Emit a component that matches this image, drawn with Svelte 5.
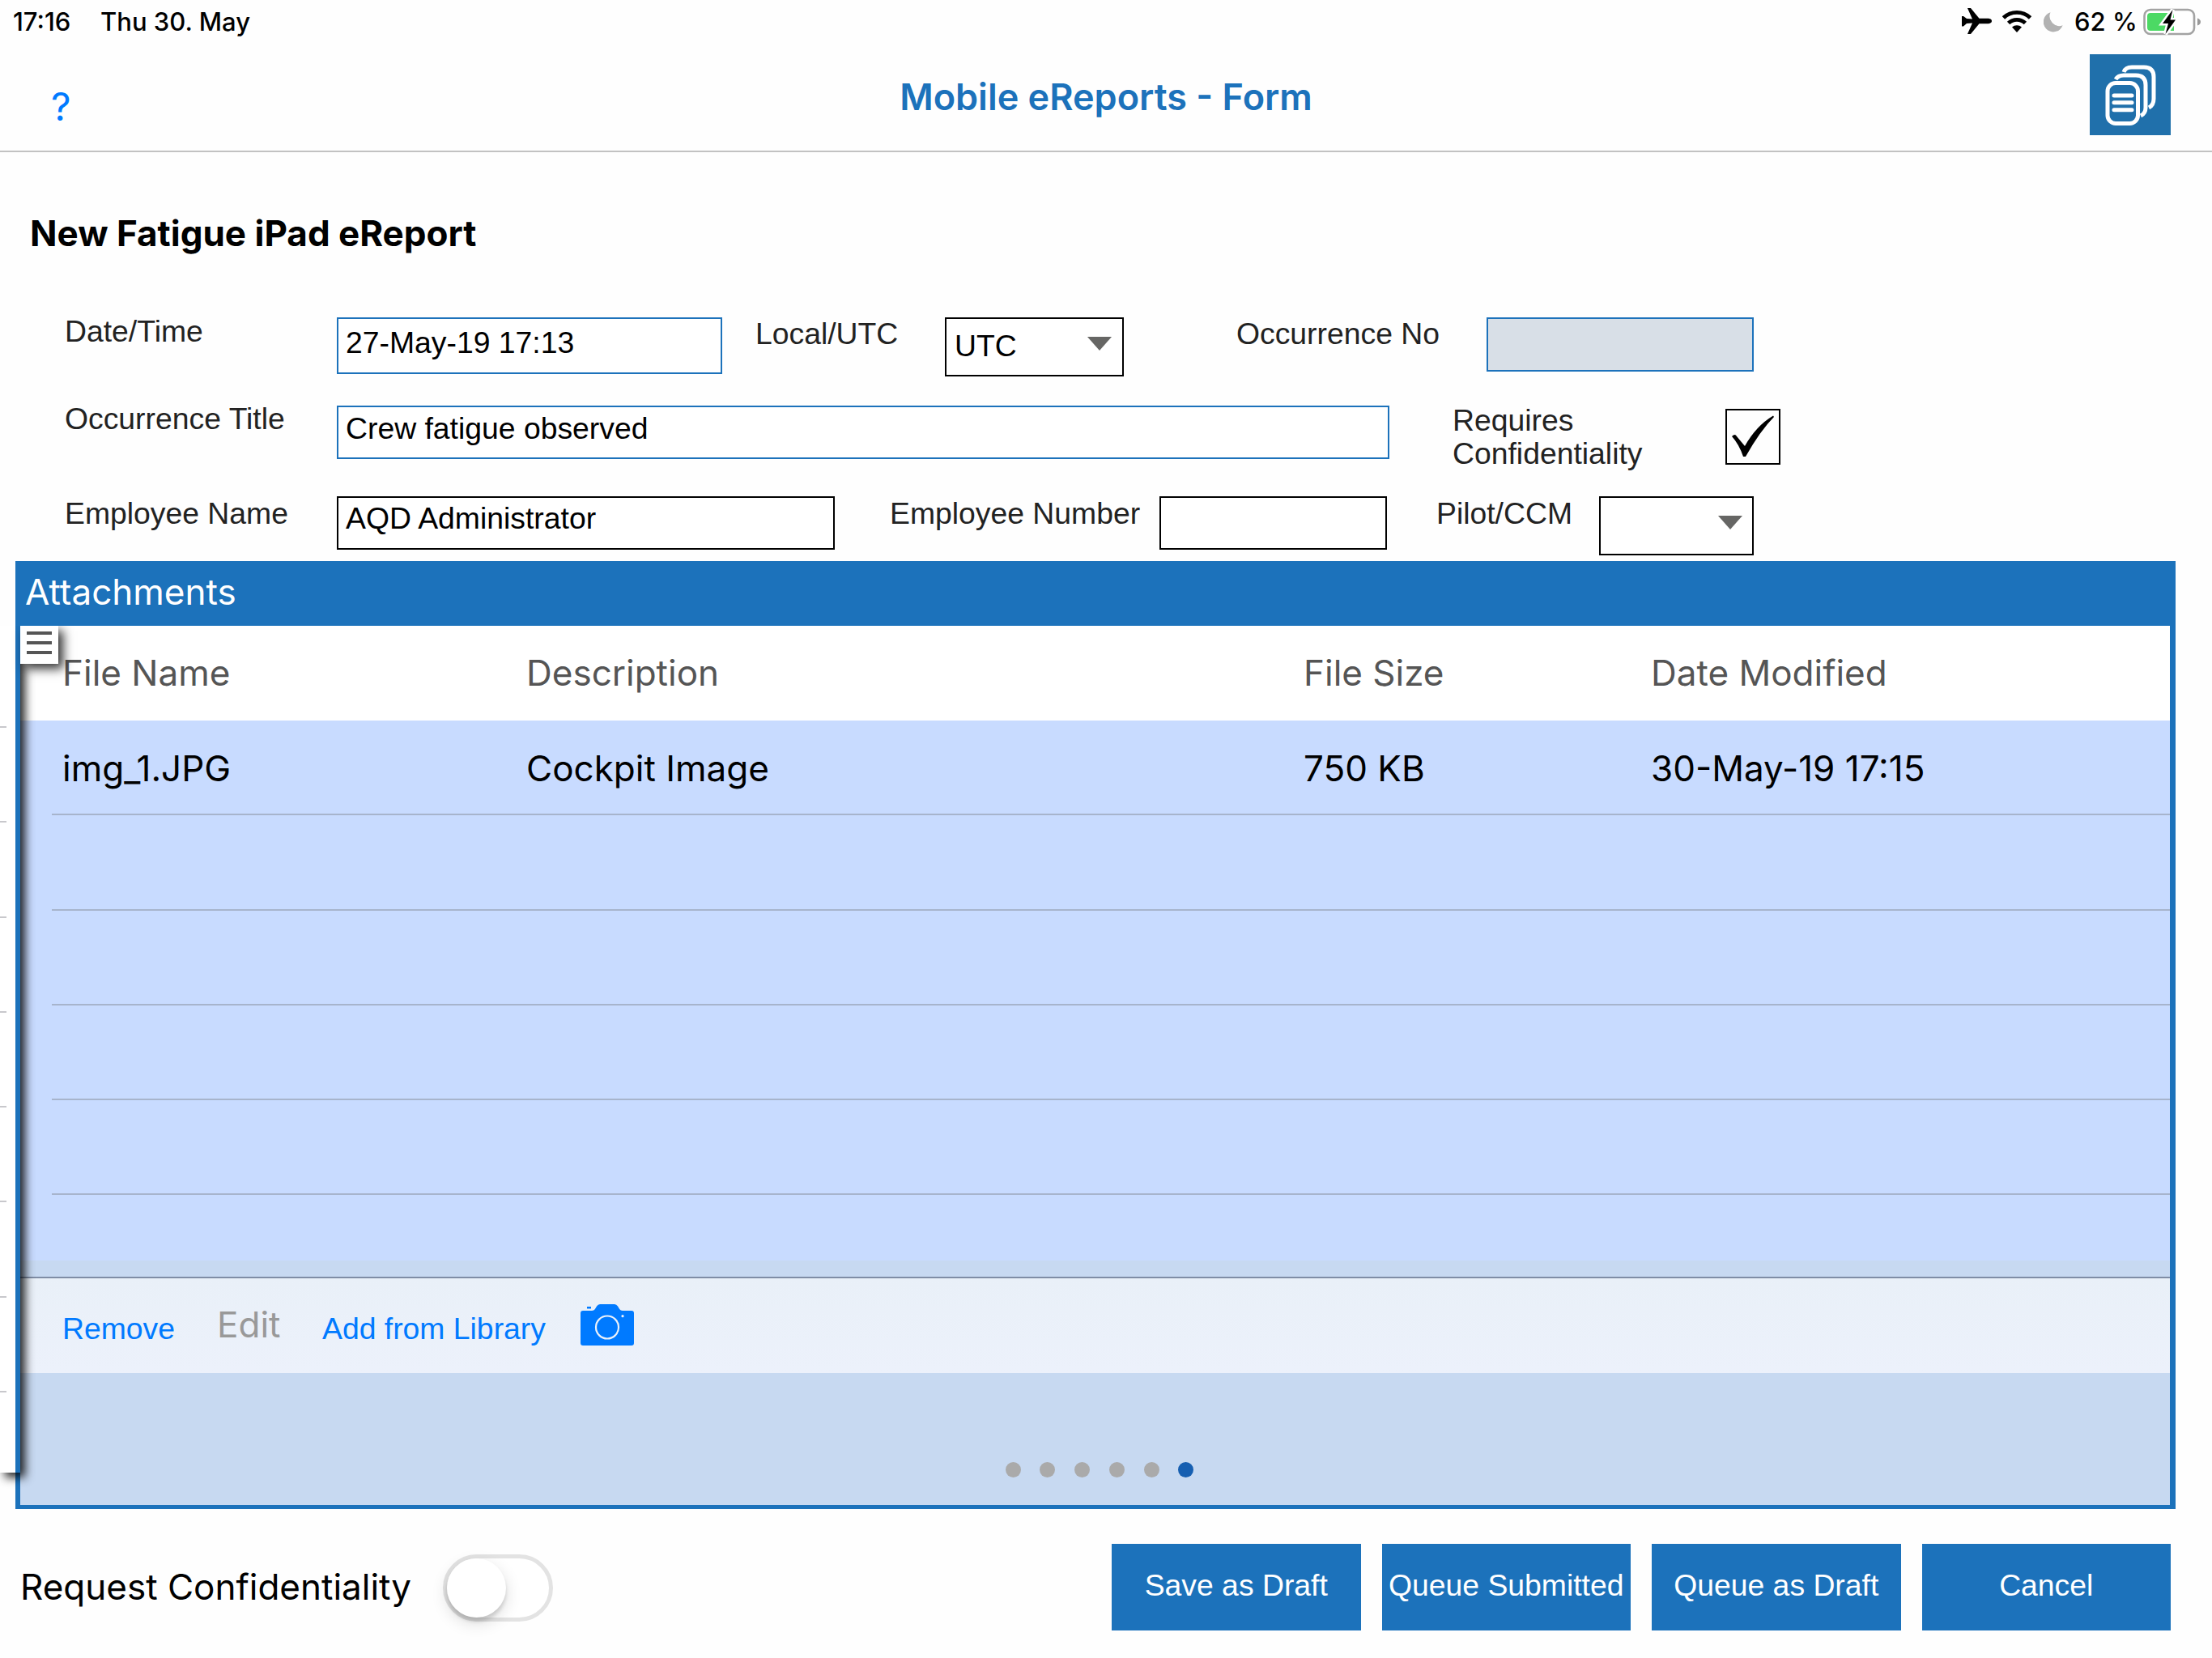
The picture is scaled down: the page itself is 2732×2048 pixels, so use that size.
<script lang="ts">
	const attachments = [
		{ name: 'img_1.JPG', description: 'Cockpit Image', size: '750 KB', modified: '30-May-19 17:15' }
	];
	const emptyRows = [0, 1, 2, 3, 4];
	const drawerLines = [0, 1, 2, 3, 4, 5, 6, 7];

	const pageCount = 6;
	let currentPage = 5;

	const actions = ['Save as Draft', 'Queue Submitted', 'Queue as Draft', 'Cancel'];
	let requestConfidentiality = false;
</script>

<div class="screen">
	<div class="status-bar">
		<span class="time">17:16</span>
		<span class="date">Thu 30. May</span>
		<div class="status-icons">
			<svg class="plane" viewBox="0 0 37 32" width="37" height="32">
				<path d="M0 10 L2 10 L6 13 L13 13.5 L7 0 L11 0 L21.5 12.8 L33 12.8 Q37 13.4 37 16 Q37 18.6 33 19.2 L21.5 19.2 L11 32 L7 32 L13 18.5 L6 19 L2 22.5 L0 22.5 Z" />
			</svg>
			<svg class="wifi" viewBox="0 0 36 27" width="36" height="27">
				<path d="M1.5 9 A24 24 0 0 1 34.5 9" fill="none" stroke="#000" stroke-width="4.8" />
				<path d="M7.6 15.6 A15 15 0 0 1 28.4 15.6" fill="none" stroke="#000" stroke-width="4.8" />
				<path d="M12 20.6 A9 9 0 0 1 24 20.6 L18 27 Z" />
			</svg>
			<svg class="moon" viewBox="0 0 24 25" width="24" height="25">
				<path d="M8.5 0.3 A12.3 12.3 0 1 0 23.6 16.3 A12 12 0 0 1 8.5 0.3 Z" fill="#b2b2b2" />
			</svg>
			<span class="percent">62 %</span>
			<svg class="battery" viewBox="0 0 72 34" width="72" height="34">
				<rect x="1.5" y="2" width="61.5" height="30" rx="7.5" fill="#fff" stroke="#a3a3a3" stroke-width="2.6" />
				<path d="M9 6 H38 V28 H9 Q5 28 5 24 V10 Q5 6 9 6 Z" fill="#4cd964" />
				<path d="M67 12.5 Q71 14 71 17 Q71 20 67 21.5 Z" fill="#999" />
				<path d="M36.5 2 L24 19 H31 L27.5 32 L40 14.5 H33.5 Z" fill="#000" stroke="#fff" stroke-width="5" paint-order="stroke" />
			</svg>
		</div>
	</div>

	<header class="nav">
		<span class="help">?</span>
		<h2 class="nav-title">Mobile eReports - Form</h2>
		<button type="button" class="docs" aria-label="Documents">
			<svg viewBox="0 0 100 100" width="100" height="100" fill="none" stroke="#fff" stroke-width="5">
				<path d="M42 22 Q44 16 52 16 H67 Q79 16 79 28 V55 Q79 63 73 66" />
				<path d="M32 31 Q35 26 42 26 H57 Q69 26 69 38 V66 Q69 73 63 76" />
				<rect x="22" y="35.500" width="37.500" height="50" rx="10" />
				<path d="M30 51 H52 M30 59.800 H52 M30 68.700 H52" stroke-linecap="round" />
			</svg>
		</button>
	</header>

	<h1 class="report-title">New Fatigue iPad eReport</h1>

	<div class="form">
		<div class="form-row first">
			<span class="label">Date/Time</span>
			<div class="field blue date-field">27-May-19 17:13</div>
			<span class="label low">Local/UTC</span>
			<div class="field select utc">UTC<i class="caret"></i></div>
			<span class="label low">Occurrence No</span>
			<div class="field blue readonly"></div>
		</div>
		<div class="form-row second">
			<span class="label">Occurrence Title</span>
			<div class="field blue">Crew fatigue observed</div>
			<span class="label two-lines">Requires Confidentiality</span>
			<div class="checkbox">
				<svg viewBox="0 0 68 69" width="68" height="69">
					<path d="M8 34 Q12 30 14 34 L24 46 Q38 21 59 8.500 L60 10 Q43 27 25 59 H22 Q17 44 8 34 Z" />
				</svg>
			</div>
		</div>
		<div class="form-row third">
			<span class="label">Employee Name</span>
			<div class="field">AQD Administrator</div>
			<span class="label">Employee Number</span>
			<div class="field"></div>
			<span class="label">Pilot/CCM</span>
			<div class="field select ccm"><i class="caret"></i></div>
		</div>
	</div>

	<section class="panel">
		<div class="panel-header">Attachments</div>
		<div class="table-head columns">
			<span>File Name</span>
			<span>Description</span>
			<span>File Size</span>
			<span>Date Modified</span>
		</div>
		<div class="table-body">
			{#each attachments as file}
				<div class="table-row columns">
					<span class="tight">{file.name}</span>
					<span>{file.description}</span>
					<span>{file.size}</span>
					<span class="stamp">{file.modified}</span>
				</div>
			{/each}
			{#each emptyRows as row (row)}
				<div class="table-row"></div>
			{/each}
		</div>
		<div class="toolbar">
			<span class="link">Remove</span>
			<span class="link disabled">Edit</span>
			<span class="link">Add from Library</span>
			<svg class="camera" viewBox="0 0 66 51" width="66" height="51">
				<path d="M8 3 H13 V5.500 H8 Z M3 8 H14 Q17 8 18.500 5 L20 2.500 Q21.500 0 24 0 H42 Q44.500 0 46 2.500 L47.500 5 Q49 8 52 8 H63 Q66 8 66 11 V48 Q66 51 63 51 H3 Q0 51 0 48 V11 Q0 8 3 8 Z" fill="#007aff" />
				<circle cx="33" cy="28.500" r="14" fill="none" stroke="#ebf1fa" stroke-width="2.200" />
				<circle cx="52" cy="14.700" r="1.600" fill="#ebf1fa" />
			</svg>
		</div>
		<div class="pager">
			{#each Array(pageCount) as _, i}
				<span class="dot" class:current={i === currentPage}></span>
			{/each}
		</div>

		<!-- collapsed side drawer with its handle -->
		<div class="drawer-clip">
			<div class="drawer">
				{#each drawerLines as line (line)}
					<div class="drawer-line"></div>
				{/each}
			</div>
			<div class="handle">
				<i></i><i></i><i></i>
			</div>
		</div>
	</section>

	<footer class="footer">
		<span class="toggle-label">Request Confidentiality</span>
		<div class="toggle" class:on={requestConfidentiality}><div class="knob"></div></div>
		<div class="actions">
			{#each actions as action}
				<button type="button" class="action-btn">{action}</button>
			{/each}
		</div>
	</footer>
</div>

<style>
	:global(body) {
		margin: 0;
		background: #fff;
	}

	.screen {
		display: flex;
		flex-direction: column;
		width: 2732px;
		height: 2048px;
		overflow: hidden;
		box-sizing: border-box;
		background: #fefefe;
		color: #000;
		font-family: Inter, sans-serif;
	}

	.screen :global(*) {
		box-sizing: border-box;
	}

	.status-bar {
		display: flex;
		align-items: center;
		height: 52px;
		flex-shrink: 0;
		padding: 0 13px 0 16px;
		font-size: 31px;
		font-weight: 500;
		white-space: pre;
	}

	.time {
		width: 108px;
	}

	.status-icons {
		display: flex;
		align-items: center;
		margin-left: auto;
	}

	.wifi {
		margin-left: 13px;
	}

	.moon {
		margin: 2px 14px 0 15px;
	}

	.percent {
		width: 85px;
	}

	.battery {
		margin-top: 2px;
	}

	.nav {
		display: grid;
		grid-template-columns: 1fr auto 1fr;
		align-items: start;
		height: 136px;
		flex-shrink: 0;
		padding: 0 51px 0 63px;
		border-bottom: 2px solid #c2c2c2;
	}

	.help {
		margin-top: 50px;
		font-size: 48px;
		line-height: 60px;
		color: #007aff;
	}

	.nav-title {
		margin: 38px 0 0 -12px;
		font-size: 45px;
		font-weight: 600;
		line-height: 60px;
		color: #1c72bb;
	}

	.docs {
		justify-self: end;
		width: 100px;
		height: 100px;
		margin-top: 15px;
		padding: 0;
		border: 0;
		background: #2070ab;
	}

	.docs svg {
		display: block;
	}

	.report-title {
		margin: 70px 0 0 37px;
		font-size: 44px;
		font-weight: 700;
		line-height: 60px;
	}

	.form {
		display: flex;
		flex-direction: column;
		height: 375px;
		flex-shrink: 0;
		padding: 71px 0 0 80px;
		font-family: "Liberation Sans", Arial, sans-serif;
		font-size: 37.33px;
		line-height: 41px;
	}

	.form-row {
		display: grid;
		align-items: start;
		flex-shrink: 0;
	}

	.form-row.first {
		grid-template-columns: 336px 476px 41px 234px 221px 139px 309px 330px;
		height: 108px;
	}

	.form-row.first > :nth-child(3) {
		grid-column: 3 / 5;
		margin-left: 41px;
	}

	.form-row.first > :nth-child(5) {
		grid-column: 6 / 8;
		margin-left: 139px;
	}

	.form-row.second {
		grid-template-columns: 336px 1300px 415px 68px;
		height: 117px;
	}

	.form-row.third {
		grid-template-columns: 336px 615px 401px 281px 262px 191px;
	}

	.label {
		color: #222;
		white-space: nowrap;
	}

	.label.low {
		margin-top: 3px;
	}

	.label.two-lines {
		width: 260px;
		margin: 2px 0 0 78px;
		white-space: normal;
	}

	.form-row.third .label {
		margin-top: 0;
	}

	.form-row.third .label:nth-child(3) {
		margin-left: 68px;
	}

	.form-row.third .label:nth-child(5) {
		margin-left: 61px;
	}

	.field {
		height: 66px;
		padding: 5px 9px;
		border: 2px solid #000;
		background: #fff;
		white-space: nowrap;
	}

	.field.blue {
		border-color: #1c72bb;
	}

	.form-row.first .field {
		height: 67px;
		margin-top: 3px;
	}

	.form-row.first .date-field {
		height: 70px;
		padding-top: 9px;
	}

	.form-row.second .field {
		margin-top: 4px;
		padding-top: 6px;
	}

	.field.readonly {
		background: #d8dfe7;
	}

	.field.select {
		display: flex;
		justify-content: space-between;
	}

	.form-row.first .utc {
		height: 73px;
		padding: 13px 13px 0 10px;
	}

	.caret {
		margin: 9px 0 0 auto;
		width: 0;
		height: 0;
		border: 15px solid transparent;
		border-top: 17px solid #666664;
		border-bottom: 0;
	}

	.form-row.third .ccm {
		height: 73px;
		padding: 13px 12px 0;
	}

	.form-row.third .field {
		margin-top: -1px;
	}

	.checkbox {
		height: 69px;
		margin-top: 8px;
		border: 2px solid #000;
	}

	.checkbox svg {
		display: block;
		margin: -2px;
	}

	.panel {
		position: relative;
		display: flex;
		flex-direction: column;
		width: 2668px;
		height: 1171px;
		flex-shrink: 0;
		margin-left: 19px;
		border: solid #1c72bb;
		border-width: 0 7px 5px 6px;
		background: #c7d9f1;
		font-size: 44px;
	}

	.panel-header {
		height: 80px;
		flex-shrink: 0;
		padding-left: 6px;
		background: #1c72bb;
		color: #fff;
		line-height: 77px;
	}

	.columns {
		display: grid;
		grid-template-columns: 573px 960px 429px 1fr;
		line-height: 117px;
	}

	.table-head {
		height: 117px;
		flex-shrink: 0;
		padding-left: 52px;
		background: #fff;
		color: #555;
	}

	.table-body {
		height: 667px;
		flex-shrink: 0;
		overflow: hidden;
		padding-left: 39px;
		background: #c8dbff;
	}

	.table-row {
		height: 117.300px;
		padding-left: 13px;
		border-bottom: 2px solid #a7b4cc;
	}

	.table-row.columns {
		line-height: 118px;
	}

	.toolbar {
		display: flex;
		align-items: flex-start;
		height: 119px;
		flex-shrink: 0;
		margin-top: 20px;
		padding: 42px 0 0 52px;
		border-top: 2px solid #7f8da5;
		background: linear-gradient(#e9f0f8, #ecf1fb);
	}

	.link {
		width: 191px;
		color: #007aff;
		font-family: "Liberation Sans", Arial, sans-serif;
		font-size: 37.330px;
		line-height: 41px;
		white-space: nowrap;
	}

	.link.disabled {
		width: 130px;
		margin-top: -5px;
		color: #999;
		font-family: Inter, sans-serif;
		font-size: 44px;
	}

	.link:nth-child(3) {
		width: 319px;
	}

	.camera {
		margin-top: -10px;
	}

	.pager {
		display: flex;
		justify-content: center;
		gap: 23.700px;
		padding: 110px 0 0 11px;
	}

	.dot {
		width: 19px;
		height: 19px;
		border-radius: 50%;
		background: #aaa;
	}

	.dot.current {
		background: #165fb1;
	}

	.drawer-clip {
		position: absolute;
		top: 80px;
		left: -25px;
		width: 140px;
		height: 1091px;
		overflow: hidden;
	}

	.drawer {
		width: 25px;
		height: 1066px;
		margin-top: -20px;
		padding-top: 144px;
		border-right: 6px solid #1c72bb;
		background: #fff;
		box-shadow: 6px 6px 12px rgba(0, 0, 0, 0.85);
	}

	.drawer-line {
		width: 8px;
		height: 117.300px;
		border-top: 2px solid #c8c8cc;
	}

	.handle {
		position: absolute;
		top: 0;
		left: 25px;
		display: flex;
		flex-direction: column;
		gap: 8px;
		width: 47px;
		height: 47px;
		padding: 7px 8px;
		background: #fff;
		box-shadow: 6px 6px 12px rgba(0, 0, 0, 0.8);
	}

	.handle i {
		height: 4px;
		background: #555;
	}

	.footer {
		display: flex;
		align-items: flex-start;
		height: 184px;
		flex-shrink: 0;
		padding: 43px 51px 0 25px;
	}

	.toggle-label {
		width: 522px;
		font-size: 44px;
		line-height: 107px;
	}

	.toggle {
		width: 136px;
		height: 83px;
		margin-top: 13px;
		border: 5px solid #e3e3e3;
		border-radius: 42px;
		background: #fff;
	}

	.knob {
		width: 73px;
		height: 73px;
		border-radius: 50%;
		background: #fff;
		box-shadow: 0 7px 20px rgba(0, 0, 0, 0.14), 0 5px 4px rgba(0, 0, 0, 0.13);
	}

	.toggle.on .knob {
		margin-left: auto;
	}

	.actions {
		display: flex;
		gap: 26px;
		margin-left: auto;
	}

	.action-btn {
		width: 307.500px;
		height: 107px;
		padding: 0 0 4px;
		border: 0;
		background: #1c72bb;
		color: #fff;
		font-family: "Liberation Sans", Arial, sans-serif;
		font-size: 37.330px;
		white-space: nowrap;
	}
</style>
